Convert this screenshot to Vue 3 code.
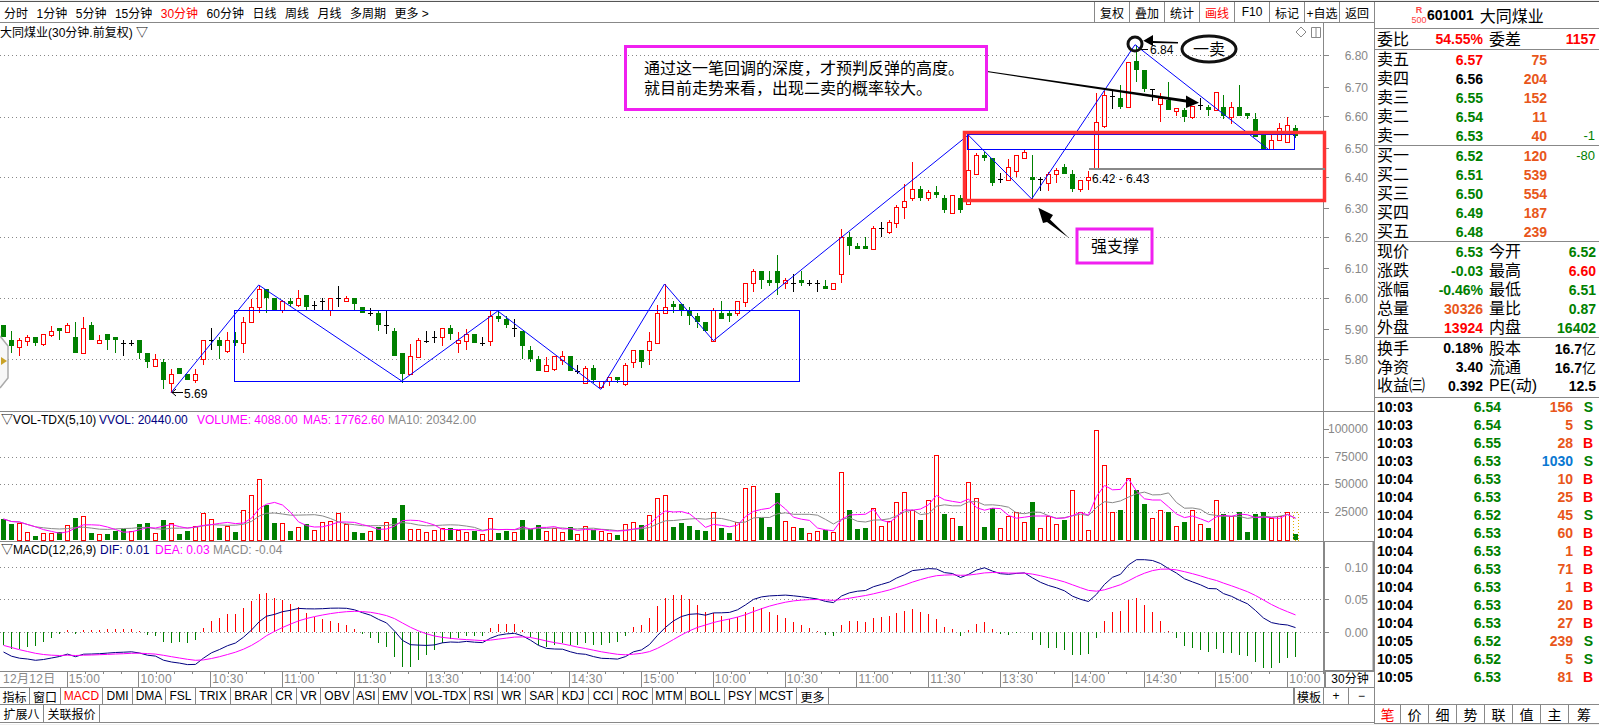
<template>
  <div class="app">
    <div class="left">
      <div class="toolbar">
        <span v-for="p in periods" :key="p" class="period" :class="{ on: p == '30分钟' }">{{ p }}</span>
        <div class="tools">
          <span v-for="t in tools" :key="t" class="tool" :class="{ on: t == '画线' }">{{ t }}</span>
        </div>
      </div>

      <div class="pane pane-price">
        <svg class="chart" width="1374" height="388" viewBox="0 23 1374 388">
          <g class="grid">
            <line v-for="y in priceGrid" :key="y" x1="0" x2="1323" :y1="y + 0.5" :y2="y + 0.5" />
          </g>
          <line class="axis" x1="1323.5" x2="1323.5" y1="23" y2="411" />
          <g v-for="l in priceLabels" :key="l.t">
            <line class="axis" x1="1323" x2="1329" :y1="l.y + 0.5" :y2="l.y + 0.5" />
            <text class="tick-label" x="1368" :y="l.y + 5">{{ l.t }}</text>
          </g>

          <g class="crisp">
            <g v-for="c in bars" :key="c.i">
              <template v-if="c.kind == 'k'">
                <line class="wick-k" :x1="c.x" :x2="c.x" :y1="c.hi" :y2="c.lo" />
                <line class="wick-k" :x1="c.x - 2.5" :x2="c.x + 2.5" :y1="c.top + 0.5" :y2="c.top + 0.5" />
              </template>
              <template v-else-if="c.kind == 'r'">
                <line class="wick-r" :x1="c.x" :x2="c.x" :y1="c.hi" :y2="c.top" />
                <line class="wick-r" :x1="c.x" :x2="c.x" :y1="c.bot" :y2="c.lo" />
                <rect class="body-r" :x="c.x - 2" :y="c.top + 0.5" width="4" :height="c.bot - c.top" />
              </template>
              <template v-else>
                <line class="wick-g" :x1="c.x" :x2="c.x" :y1="c.hi" :y2="c.lo" />
                <rect class="body-g" :x="c.x - 2.5" :y="c.top" width="5" :height="c.bot - c.top" />
              </template>
            </g>
          </g>

          <path class="tag" d="M0 336 L8 346 V378 L0 388" />
          <path class="tag-mark" d="M1 357 L7 361 L1 365 Z" />

          <g class="draw-blue">
            <polyline :points="zigzag" />
            <rect x="234.5" y="310.5" width="565" height="71" />
            <rect x="967.5" y="134.5" width="327" height="15" />
          </g>

          <rect class="red-box" x="964.5" y="132.5" width="360" height="68" />
          <line class="grey-bar" x1="1089" x2="1325" y1="169" y2="169" />

          <text class="note-num" x="1092" y="183">6.42 - 6.43</text>
          <line class="thin-k" x1="172" x2="183" y1="392.5" y2="392.5" />
          <path class="thin-k" d="M176 389 L172 392.5 L176 396" />
          <text class="note-num" x="184" y="398">5.69</text>
          <line class="thin-k" x1="1140" x2="1148" y1="49.5" y2="49.5" />
          <text class="note-num" x="1150" y="54">6.84</text>

          <circle class="ring" cx="1135" cy="44" r="7" />
          <ellipse class="ring" cx="1209" cy="49" rx="27" ry="13" />
          <text class="note-text" x="1209" y="55" text-anchor="middle">一卖</text>
          <polygon class="arrow" points="1178,42 1153,41 1153,35 1143.3,40.7 1153,46 1153,43 1178,43.5" />
          <polygon class="arrow" points="987,71 1186,99.4 1186,95.5 1199,102.7 1186,108 1186,102.4 987,72" />
          <polygon class="arrow" points="1038.3,207.7 1053,215 1050,219.5 1069.3,238.3 1047,222 1043,223" />

          <rect class="pink-box" x="625.5" y="46.5" width="361" height="63" />
          <text class="note-text" x="644" y="74">通过这一笔回调的深度，才预判反弹的高度。</text>
          <text class="note-text" x="644" y="94">就目前走势来看，出现二卖的概率较大。</text>
          <rect class="pink-box" x="1077" y="229" width="75" height="34" />
          <text class="note-text" x="1115" y="252" text-anchor="middle">强支撑</text>

          <path class="corner" d="M1301 27 L1306 32 L1301 37 L1296 32 Z" />
          <path class="corner" d="M1311.5 27.5 H1320.5 V37.5 H1311.5 Z M1316 27.5 V37.5" />
        </svg>
        <div class="pane-head">大同煤业(30分钟.前复权) ▽</div>
      </div>

      <div class="pane pane-vol">
        <svg class="chart" width="1374" height="129" viewBox="0 412 1374 129">
          <g class="grid">
            <line v-for="l in volLabels.slice(1)" :key="l.t" x1="0" x2="1323" :y1="l.y + 0.5" :y2="l.y + 0.5" />
          </g>
          <line class="axis" x1="1323.5" x2="1323.5" y1="412" y2="541" />
          <g v-for="l in volLabels" :key="l.t">
            <line class="axis" x1="1323" x2="1329" :y1="l.y + 0.5" :y2="l.y + 0.5" />
            <text class="tick-label" x="1368" :y="l.y + 4">{{ l.t }}</text>
          </g>
          <g class="crisp">
            <g v-for="b in bars" :key="b.i">
              <rect v-if="b.volKind == 'g'" class="body-g" :x="b.x - 2.5" :y="540 - b.vol" width="5" :height="b.vol" />
              <rect v-else class="body-r" :x="b.x - 2" :y="540.5 - b.vol" width="4" :height="b.vol" />
            </g>
            <rect class="forecast" x="1293.5" y="512.5" width="5" height="28" />
          </g>
          <polyline class="line-grey" :points="ma10" />
          <polyline class="line-pink" :points="ma5" />
        </svg>
        <div class="pane-head">
          <span class="h1">▽VOL-TDX(5,10)</span>
          <span class="navy h2">VVOL: 20440.00</span>
          <span class="pink h3">VOLUME: 4088.00</span>
          <span class="pink h4">MA5: 17762.60</span>
          <span class="grey h5">MA10: 20342.00</span>
        </div>
      </div>

      <div class="pane pane-macd">
        <svg class="chart" width="1374" height="129" viewBox="0 542 1374 129">
          <g class="grid">
            <line v-for="l in macdLabels" :key="l.t" x1="0" x2="1323" :y1="l.y + 0.5" :y2="l.y + 0.5" />
          </g>
          <g v-for="l in macdLabels" :key="l.t">
            <line class="axis" x1="1323" x2="1329" :y1="l.y + 0.5" :y2="l.y + 0.5" />
            <text class="tick-label" x="1368" :y="l.y + 5">{{ l.t }}</text>
          </g>
          <rect class="macd-box" x="1324" y="541" width="49.5" height="130" />
          <g class="crisp">
            <line
              v-for="m in macdBars"
              :key="m.i"
              :class="m.up ? 'wick-r' : 'wick-g'"
              :x1="m.x"
              :x2="m.x"
              y1="632"
              :y2="m.y"
            />
          </g>
          <polyline class="line-navy" :points="difLine" />
          <polyline class="line-pink" :points="deaLine" />
        </svg>
        <div class="pane-head">
          <span class="m1">▽MACD(12,26,9)</span>
          <span class="navy m2">DIF: 0.01</span>
          <span class="pink m3">DEA: 0.03</span>
          <span class="grey m4">MACD: -0.04</span>
        </div>
      </div>

      <div class="bottom-row time-row">
        <div class="times">
          <span class="first-time">12月12日</span>
          <span v-for="(t, n) in times" :key="n" class="time-cell" :class="{ last: n == times.length - 1 }">{{ t }}</span>
        </div>
        <span class="period-cell">30分钟</span>
      </div>

      <div class="bottom-row">
        <span v-for="t in indicators" :key="t[0]" class="ind" :class="{ on: t[0] == 'MACD' }" :style="{ width: t[1] + 'px' }">{{ t[0] }}</span>
        <span class="ind model">模板</span>
        <span class="ind plus">+</span>
        <span class="ind minus">−</span>
      </div>

      <div class="bottom-row">
        <span class="ind" style="width: 44px">扩展八</span>
        <span class="ind" style="width: 56px">关联报价</span>
      </div>
    </div>

    <div class="panel">
      <div class="title">
        <span class="badge"><b>R</b><i>500</i></span>
        <b class="code">601001</b>
        <span class="name">大同煤业</span>
      </div>

      <div class="sect quote-grid">
        <span class="lab">委比</span><b class="num red">54.55%</b>
        <span class="lab2">委差</span><b class="num red">1157</b>
      </div>

      <div class="sect">
        <div v-for="r in asks" :key="r[0]" class="book">
          <span class="lab">{{ r[0] }}</span>
          <b class="num" :class="r[1]">{{ r[2] }}</b>
          <b class="num orange">{{ r[3] }}</b>
          <span class="delta">{{ r[4] }}</span>
        </div>
      </div>

      <div class="sect">
        <div v-for="r in bids" :key="r[0]" class="book">
          <span class="lab">{{ r[0] }}</span>
          <b class="num" :class="r[1]">{{ r[2] }}</b>
          <b class="num orange">{{ r[3] }}</b>
          <span class="delta">{{ r[4] }}</span>
        </div>
      </div>

      <div class="sect">
        <div v-for="r in quotes" :key="r[0]" class="quote-grid">
          <span class="lab">{{ r[0] }}</span><b class="num" :class="r[2]">{{ r[1] }}</b>
          <span class="lab2">{{ r[3] }}</span><b class="num" :class="r[5]">{{ r[4] }}</b>
        </div>
      </div>

      <div class="sect stats">
        <div class="quote-grid">
          <span class="lab">换手</span><b class="num">0.18%</b>
          <span class="lab2">股本</span><b class="num">16.7<span class="yi">亿</span></b>
        </div>
        <div class="quote-grid">
          <span class="lab">净资</span><b class="num">3.40</b>
          <span class="lab2">流通</span><b class="num">16.7<span class="yi">亿</span></b>
        </div>
        <div class="quote-grid">
          <span class="lab">收益㈢</span><b class="num">0.392</b>
          <span class="lab2">PE(动)</span><b class="num">12.5</b>
        </div>
      </div>

      <div class="ticks">
        <div v-for="(t, n) in ticks" :key="n" class="tick">
          <b class="t-time">{{ t[0] }}</b>
          <b class="num green">{{ t[1] }}</b>
          <b class="num" :class="t[2] == '1030' ? 'blue' : 'orange'">{{ t[2] }}</b>
          <b class="num" :class="t[3] == 'S' ? 'green' : 'red'">{{ t[3] }}</b>
        </div>
      </div>

      <div class="side-tabs">
        <span v-for="(t, n) in sideTabs" :key="t" class="side-tab" :class="{ on: n == 0 }">{{ t }}</span>
      </div>
    </div>
  </div>
</template>

<script setup>
const periods = ["分时", "1分钟", "5分钟", "15分钟", "30分钟", "60分钟", "日线", "周线", "月线", "多周期", "更多 >"];
const tools = ["复权", "叠加", "统计", "画线", "F10", "标记", "+自选", "返回"];
const sideTabs = ["笔", "价", "细", "势", "联", "值", "主", "筹"];
const times = ["15:00", "10:00", "10:30", "11:00", "11:30", "13:30", "14:00", "14:30", "15:00", "10:00", "10:30", "11:00", "11:30", "13:30", "14:00", "14:30", "15:00", "10:00"];

const indicators = [
  ["指标", 30], ["窗口", 31], ["MACD", 42], ["DMI", 30], ["DMA", 33], ["FSL", 30], ["TRIX", 35],
  ["BRAR", 41], ["CR", 25], ["VR", 24], ["OBV", 33], ["ASI", 25], ["EMV", 33], ["VOL-TDX", 58],
  ["RSI", 28], ["WR", 28], ["SAR", 32], ["KDJ", 31], ["CCI", 29], ["ROC", 35], ["MTM", 33],
  ["BOLL", 39], ["PSY", 31], ["MCST", 41], ["更多", 32],
];

const asks = [
  ["卖五", "red", "6.57", "75", ""],
  ["卖四", "", "6.56", "204", ""],
  ["卖三", "green", "6.55", "152", ""],
  ["卖二", "green", "6.54", "11", ""],
  ["卖一", "green", "6.53", "40", "-1"],
];
const bids = [
  ["买一", "green", "6.52", "120", "-80"],
  ["买二", "green", "6.51", "539", ""],
  ["买三", "green", "6.50", "554", ""],
  ["买四", "green", "6.49", "187", ""],
  ["买五", "green", "6.48", "239", ""],
];
const quotes = [
  ["现价", "6.53", "green", "今开", "6.52", "green"],
  ["涨跌", "-0.03", "green", "最高", "6.60", "red"],
  ["涨幅", "-0.46%", "green", "最低", "6.51", "green"],
  ["总量", "30326", "orange", "量比", "0.87", "green"],
  ["外盘", "13924", "red", "内盘", "16402", "green"],
];
const ticks = [
  ["10:03", "6.54", "156", "S"], ["10:03", "6.54", "5", "S"], ["10:03", "6.55", "28", "B"], ["10:03", "6.53", "1030", "S"],
  ["10:04", "6.53", "10", "B"], ["10:04", "6.53", "25", "B"], ["10:04", "6.52", "45", "S"], ["10:04", "6.53", "60", "B"],
  ["10:04", "6.53", "1", "B"], ["10:04", "6.53", "71", "B"], ["10:04", "6.53", "1", "B"], ["10:04", "6.53", "20", "B"],
  ["10:04", "6.53", "27", "B"], ["10:05", "6.52", "239", "S"], ["10:05", "6.52", "5", "S"], ["10:05", "6.53", "81", "B"],
];

// kind, high, body top, body bottom, low (screen y)
const candles = [
  ["g",325,325,337,337],["g",331,340,346,353],["r",338,340,347,356],["r",335,337,341,346],["g",337,337,343,346],["r",334,334,344,346],
  ["r",326,331,335,337],["g",328,328,331,340],["r",323,325,332,333],["g",322,337,353,353],["r",317,328,353,353],["g",322,325,340,340],
  ["r",335,340,343,343],["g",334,334,340,350],["g",337,337,340,353],["k",340,343,343,356],["k",340,343,343,346],["g",340,340,353,359],
  ["g",353,353,362,368],["r",354,359,366,367],["g",359,362,380,389],["r",369,374,383,393],["g",368,368,374,374],["g",374,374,380,380],
  ["r",369,374,380,383],["r",340,340,359,365],["k",328,340,340,350],["g",337,340,346,359],["r",332,340,351,353],["g",332,340,343,346],
  ["r",317,322,343,353],["r",299,307,322,322],["r",285,289,307,313],["g",289,289,298,313],["g",298,298,310,310],["r",300,301,310,313],
  ["g",298,301,304,307],["r",290,298,305,307],["g",295,295,307,310],["k",301,305,305,310],["k",298,301,301,310],["r",298,298,310,316],
  ["k",286,298,298,307],["r",296,298,301,301],["g",298,298,304,310],["g",307,307,313,313],["k",308,313,313,316],["g",310,313,325,331],
  ["k",310,325,325,334],["g",328,331,356,356],["g",353,353,374,383],["r",344,356,374,375],["r",338,340,357,357],
  ["k",331,341,341,343],["k",331,337,337,343],["r",328,328,337,346],["g",325,328,334,340],["r",332,340,343,353],["r",329,334,341,350],
  ["g",334,334,343,343],["k",337,343,343,346],["r",311,316,341,346],["g",311,316,319,322],["g",316,319,325,328],["k",319,328,328,337],
  ["g",331,331,346,359],["g",346,350,359,362],["g",356,359,371,371],["r",357,365,371,371],["r",356,356,369,371],["r",351,356,360,365],
  ["g",356,356,371,371],["k",365,371,371,374],["r",366,368,383,383],["g",365,368,380,383],["r",381,381,387,389],["r",377,377,381,386],
  ["g",377,377,380,383],["r",363,365,384,386],["r",350,350,362,368],["g",350,350,362,368],["r",332,341,350,365],["r",305,313,343,343],
  ["r",284,307,313,313],["g",301,304,307,313],["g",304,304,310,316],["g",307,310,316,325],["g",313,316,322,328],["g",322,322,331,331],
  ["r",308,310,341,341],["g",301,313,319,319],["g",310,313,316,322],["r",301,301,313,316],["r",283,283,302,307],["r",269,271,283,292],
  ["g",271,271,280,289],["g",271,280,283,286],["g",255,271,283,295],["r",278,280,283,289],["k",274,283,283,292],["g",271,280,283,286],
  ["k",280,283,283,286],["k",280,283,283,292],["g",280,286,289,289],["r",283,283,289,289],["r",229,237,274,283],["g",232,237,246,255],
  ["g",243,246,249,249],["g",237,246,249,249],["r",226,228,249,249],["k",222,228,228,237],["r",220,222,232,234],["r",205,207,223,228],
  ["r",184,201,207,219],["r",162,189,198,201],["g",186,189,198,201],["r",190,192,198,201],["g",186,192,195,198],["g",195,198,210,213],
  ["r",195,195,213,213],["g",195,198,210,213],["r",135,170,204,204],["r",153,155,174,174],["g",152,155,158,161],["g",158,158,183,186],
  ["k",173,179,179,183],["r",159,167,180,180],["r",155,155,171,177],["r",149,152,158,158],["g",155,177,180,199],["k",177,179,179,191],
  ["r",172,174,183,191],["r",168,170,174,183],["g",164,167,174,174],["g",170,174,189,192],["r",180,180,189,192],["r",171,177,180,190],
  ["r",93,122,168,168],["r",91,95,126,128],["k",91,96,96,109],["g",85,98,107,109],["r",62,62,107,107],["g",45,61,70,82],
  ["g",70,70,89,92],["k",89,89,89,101],["r",93,98,104,122],["g",82,100,110,110],["r",108,108,111,116],["g",108,110,117,122],
  ["r",106,106,117,119],["k",98,105,105,110],["g",105,107,110,116],["r",92,92,110,110],["g",95,107,116,119],["r",102,107,117,124],
  ["g",85,107,116,116],["g",113,113,116,119],["g",113,119,137,137],["g",135,135,149,149],["r",135,140,149,149],["r",123,128,140,140],
  ["r",117,125,142,143],["g",125,128,136,138],
];

const volumes = [
  21,16,17,8,4,7,7,8,15,22,24,7,6,6,9,11,9,16,17,7,20,17,6,9,14,27,21,12,14,8,30,45,61,35,17,17,9,13,16,10,18,19,27,16,8,7,9,13,18,22,35,11,11,8,10,12,
  12,10,8,9,6,22,7,9,8,20,11,15,9,12,8,13,6,14,10,9,7,5,16,18,15,25,42,45,13,17,14,10,9,28,12,7,18,52,54,22,13,47,19,13,12,7,9,10,8,68,30,11,12,32,14,19,38,48,30,20,40,85,26,22,14,58,42,13,32,12,24,28,18,38,12,24,16,20,50,28,10,110,75,28,30,62,50,36,22,30,28,14,18,30,16,12,40,26,24,28,8,26,28,22,24,28,6,
];
// 这几根成交量和K线颜色不一样
const redVolumes = [117, 134];
const greenVolumes = [15];

const bars = candles.map((c, i) => {
  const center = 3.3 + 7.975 * i;
  let volKind = c[0];
  if (redVolumes.includes(i)) volKind = "r";
  if (greenVolumes.includes(i)) volKind = "g";
  return {
    i,
    kind: c[0],
    volKind,
    x: Math.round(center) + 0.5,
    hi: c[1],
    top: c[2],
    bot: c[3],
    lo: c[4],
    vol: volumes[i],
    // 收盘价,红取上沿,绿取下沿
    close: 6 + (298 - (c[0] == "g" ? c[3] : c[2])) / 303,
  };
});

const priceGrid = [55, 117, 177, 237, 298, 359];
const priceLabels = [
  ["6.80", 55], ["6.70", 87], ["6.60", 116], ["6.50", 148], ["6.40", 177], ["6.30", 208],
  ["6.20", 237], ["6.10", 268], ["6.00", 298], ["5.90", 329], ["5.80", 359],
].map((l) => ({ t: l[0], y: l[1] }));
const volLabels = [["100000", 429], ["75000", 457], ["50000", 484], ["25000", 512]].map((l) => ({ t: l[0], y: l[1] }));
const macdLabels = [["0.10", 567], ["0.05", 599], ["0.00", 632]].map((l) => ({ t: l[0], y: l[1] }));

const zigzag = "171,392.7 258.7,285 401.7,381 497.8,311 600.8,389.3 664.5,284 713.4,340.7 968.3,135 1031.7,199 1135,44.7 1268,149";

function average(n) {
  return bars.map((b, i) => {
    const part = bars.slice(Math.max(0, i - n + 1), i + 1);
    const sum = part.reduce((a, p) => a + p.vol, 0);
    return `${b.x},${(540 - sum / part.length).toFixed(1)}`;
  }).join(" ");
}
const ma5 = average(5);
const ma10 = average(10);

// MACD from the closes, seeds high so the left part stays under zero like the reference
const macdScale = 650;
let ema12 = bars[0].close + 0.095;
let ema26 = bars[0].close + 0.12;
let dea = -0.018;
const macd = bars.map((b) => {
  ema12 = (ema12 * 11 + b.close * 2) / 13;
  ema26 = (ema26 * 25 + b.close * 2) / 27;
  const dif = ema12 - ema26;
  dea = (dea * 8 + dif * 2) / 10;
  return { dif, dea, hist: (dif - dea) * 2 };
});
const toY = (v) => 632 - v * macdScale;
const difLine = macd.map((m, i) => `${bars[i].x},${toY(m.dif).toFixed(1)}`).join(" ");
const deaLine = macd.map((m, i) => `${bars[i].x},${toY(m.dea).toFixed(1)}`).join(" ");
const macdBars = macd.map((m, i) => ({ i, x: bars[i].x, y: toY(m.hist), up: m.hist > 0 }));
</script>

<style scoped>
.app {
  width: 1599px;
  height: 722px;
  margin-top: 1px;
  border-top: 1px solid #555;
  display: flex;
  font-family: "Liberation Sans", "Noto Sans CJK SC", sans-serif;
  font-size: 12px;
  color: #000;
  background: #fff;
}
.left {
  width: 1374px;
  flex: none;
  display: flex;
  flex-direction: column;
}
.toolbar {
  height: 20px;
  border-bottom: 1px solid #888;
  display: flex;
  align-items: center;
  gap: 8.5px;
  padding-left: 4px;
}
.period.on,
.tool.on,
.ind.on,
.side-tab.on {
  color: #f00;
}
.tools {
  margin-left: auto;
  display: flex;
  height: 100%;
}
.tool {
  width: 35px;
  border-left: 1px solid #888;
  display: flex;
  align-items: center;
  justify-content: center;
  box-sizing: border-box;
}
.pane {
  position: relative;
  border-bottom: 1px solid #888;
  overflow: hidden;
}
.pane-price {
  height: 388px;
}
.pane-vol,
.pane-macd {
  height: 129px;
}
.chart {
  position: absolute;
  left: 0;
  top: 0;
}
.pane-head {
  position: relative;
  display: flex;
  height: 16px;
  line-height: 16px;
  white-space: nowrap;
}
.pane-price .pane-head {
  margin-top: 2px;
}
.h1 { margin-left: 1px; width: 98px; }
.h2 { width: 98px; }
.h3 { width: 106px; }
.h4 { width: 85px; }
.m1 { margin-left: 1px; width: 99px; }
.m2 { width: 55px; }
.m3 { width: 58px; }
.navy { color: #000080; }
.pink { color: #f0f; }
.grey { color: #888; }

.bottom-row {
  height: 16px;
  display: flex;
  align-items: stretch;
  border-bottom: 1px solid #888;
  flex: none;
}
.bottom-row:last-child {
  height: 17px;
}
.time-row {
  height: 15px;
}
.times {
  width: 1324px;
  display: flex;
  overflow: hidden;
  color: #888;
  line-height: 15px;
  letter-spacing: 0.3px;
}
.first-time {
  width: 66.7px;
  flex: none;
  padding-left: 3px;
  box-sizing: border-box;
}
.time-cell {
  width: 71.8px;
  flex: none;
  box-sizing: border-box;
  border-left: 1px solid #888;
  padding-left: 1px;
  background: repeating-linear-gradient(to right, transparent 0 17px, #888 17px 18px) top left / 100% 2px no-repeat;
}
.period-cell {
  flex: 1;
  border-left: 2px solid #888;
  text-align: center;
  line-height: 15px;
}
.ind {
  border-right: 1px solid #888;
  box-sizing: border-box;
  display: flex;
  align-items: center;
  justify-content: center;
  flex: none;
  white-space: nowrap;
}
.model {
  margin-left: auto;
  width: 31px;
  border-left: 2px solid #888;
}
.plus,
.minus {
  width: 25px;
}
.minus {
  border-right: 0;
}

.panel {
  flex: 1;
  border-left: 1px solid #888;
  display: flex;
  flex-direction: column;
  min-width: 0;
}
.title {
  height: 26px;
  border-bottom: 1px solid #888;
  display: flex;
  align-items: center;
  padding-left: 36px;
}
.badge {
  width: 16px;
  display: flex;
  flex-direction: column;
  align-items: center;
  color: #f44;
  font-size: 9px;
  line-height: 10px;
}
.badge i {
  font-style: normal;
}
.code {
  font-size: 14px;
  margin-right: 6px;
}
.name {
  font-size: 16px;
}
.sect {
  border-bottom: 1px solid #888;
  flex: none;
}
.sect.quote-grid {
  height: 20px;
}
.book,
.quote-grid {
  display: grid;
  height: 19px;
  align-items: center;
}
.book {
  grid-template-columns: 50px 58px 64px 48px;
}
.quote-grid {
  grid-template-columns: 50px 58px 56px 57px;
}
.stats {
  height: 59px;
}
.lab,
.lab2 {
  font-size: 16px;
  white-space: nowrap;
  line-height: 19px;
}
.lab {
  padding-left: 2px;
}
.lab2 {
  padding-left: 6px;
}
.num {
  font-size: 14px;
  text-align: right;
  white-space: nowrap;
}
.yi {
  font-size: 14px;
  font-weight: normal;
}
.delta {
  text-align: right;
  color: #008000;
  font-size: 13px;
}
.red { color: #f00; }
.green { color: #008000; }
.orange { color: #e8561a; }
.blue { color: #0a78d2; }
.ticks {
  flex: 1;
  min-height: 0;
}
.tick {
  display: grid;
  height: 18px;
  grid-template-columns: 50px 76px 72px 20px;
  align-items: center;
}
.t-time {
  font-size: 14px;
  padding-left: 2px;
}
.side-tabs {
  height: 18px;
  border-top: 1px solid #888;
  border-bottom: 1px solid #888;
  display: flex;
  flex: none;
}
.side-tab {
  width: 28px;
  border-right: 1px solid #888;
  box-sizing: border-box;
  font-size: 14px;
  display: flex;
  align-items: center;
  justify-content: center;
}
.side-tab:first-child {
  width: 26px;
}
.side-tab:last-child {
  flex: 1;
  border-right: 0;
}

/* chart */
.grid line {
  stroke: #888;
  stroke-dasharray: 1 3;
}
.axis {
  stroke: #888;
}
.crisp {
  shape-rendering: crispEdges;
}
.wick-r { stroke: #f00; }
.wick-g { stroke: #008000; }
.wick-k { stroke: #000; }
.body-r {
  fill: #fff;
  stroke: #f00;
}
.body-g {
  fill: #008000;
}
.tick-label {
  fill: #888;
  font-size: 12px;
  text-anchor: end;
}
.tag {
  fill: #f7f7f7;
  stroke: #aaa;
  stroke-width: 1.5;
}
.tag-mark {
  fill: #c9a227;
}
.draw-blue polyline,
.draw-blue rect {
  fill: none;
  stroke: #00f;
}
.red-box {
  fill: none;
  stroke: #f33;
  stroke-width: 3.5;
}
.grey-bar {
  stroke: #888;
  stroke-width: 2;
}
.note-num {
  font-size: 12px;
  fill: #000;
}
.thin-k {
  stroke: #000;
  fill: none;
}
.ring {
  fill: none;
  stroke: #111;
  stroke-width: 3;
}
.note-text {
  font-size: 16px;
  fill: #000;
}
.arrow {
  fill: #000;
}
.pink-box {
  fill: none;
  stroke: #f020f0;
  stroke-width: 3;
}
.corner {
  fill: none;
  stroke: #888;
}
.forecast {
  fill: none;
  stroke: #e0b000;
  stroke-dasharray: 1 2;
}
.line-pink,
.line-grey,
.line-navy {
  fill: none;
}
.line-pink { stroke: #f0f; }
.line-grey { stroke: #888; }
.line-navy { stroke: #000080; }
.macd-box {
  fill: none;
  stroke: #888;
  stroke-width: 2;
}
</style>

<style>
html,
body {
  background: #f0f0f0;
}
</style>
